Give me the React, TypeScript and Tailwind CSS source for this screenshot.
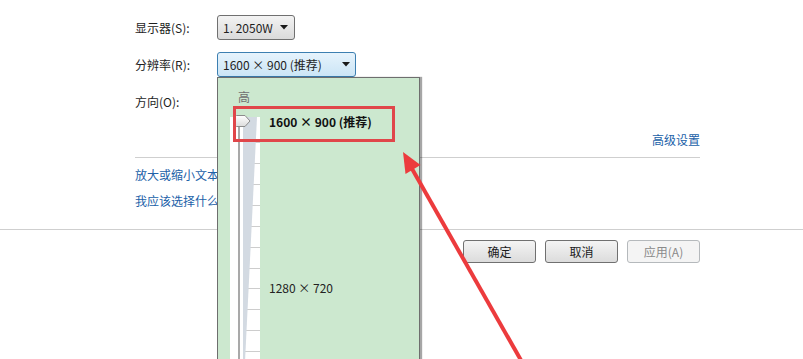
import React from "react";

function Caret() {
  return (
    <svg width="8" height="5" viewBox="0 0 8 5" className="shrink-0">
      <path d="M0 0 H8 L4 4.5 Z" fill="#1a1a1a" />
    </svg>
  );
}

function SliderTrack() {
  const ticks = [25, 46, 67, 88, 109, 130, 151, 171, 192, 213, 234];
  return (
    <svg width="30" height="245" viewBox="0 0 30 245" className="block">
      <rect x="0" y="0" width="8" height="245" fill="#ffffff" />
      <rect x="8" y="0" width="2" height="245" fill="#a9a9a9" />
      <rect x="10" y="0" width="20" height="245" fill="#ffffff" />
      {ticks.map((t) => (
        <rect key={t} x="13" y={t} width="17" height="1" fill="#cdcdcd" />
      ))}
      <polygon points="13,0 27,0 15,245 13,245" fill="#d3dae2" />
    </svg>
  );
}

function Thumb() {
  return (
    <svg width="18" height="12" viewBox="0 0 18 12">
      <defs>
        <linearGradient id="tg" x1="0" y1="0" x2="0" y2="1">
          <stop offset="0" stopColor="#ffffff" />
          <stop offset="1" stopColor="#dcdcdc" />
        </linearGradient>
      </defs>
      <path
        d="M3.5 0.5 H12 L17 6 L12 11.5 H3.5 Q0.5 11.5 0.5 8.5 V3.5 Q0.5 0.5 3.5 0.5 Z"
        fill="url(#tg)"
        stroke="#8c8c8c"
      />
    </svg>
  );
}

function Button({ label, disabled }: { label: string; disabled?: boolean }) {
  return (
    <div
      className={
        disabled
          ? "flex h-[23px] w-[73px] items-center justify-center rounded-[3px] border border-[#b5b9bc] bg-[#f4f4f4] text-[#8a8a8a]"
          : "flex h-[23px] w-[73px] items-center justify-center rounded-[3px] border border-[#707070] bg-gradient-to-b from-[#f4f4f4] to-[#dcdcdc] text-[#1a1a1a]"
      }
    >
      {label}
    </div>
  );
}

export default function App() {
  return (
    <div className="relative h-[359px] w-[803px] overflow-hidden bg-white font-['Noto_Sans_CJK_SC','Noto_Sans',sans-serif] text-[12px] leading-[16px] text-[#1e1e1e]">
      <div className="pl-[135px] pr-[103px] pt-[15px]">
        <div className="flex h-[25px] items-center">
          <span className="w-[82px]">显示器(S):</span>
          <div className="flex h-[25px] w-[78px] items-center justify-between rounded-[3px] border border-[#707070] bg-gradient-to-b from-[#f3f3f3] to-[#dadada] pl-[5px] pr-[6px]">
            <span>1. 2050W</span>
            <Caret />
          </div>
        </div>
        <div className="mt-[12px] flex h-[25px] items-center">
          <span className="w-[82px]">分辨率(R):</span>
          <div className="flex h-[25px] w-[139px] items-center justify-between rounded-[3px] border border-[#3c7fb1] bg-gradient-to-b from-[#e6f3fc] to-[#cbe5f6] pl-[5px] pr-[5px]">
            <span>1600 × 900 (推荐)</span>
            <Caret />
          </div>
        </div>
        <div className="mt-[12px] flex h-[25px] items-center">
          <span>方向(O):</span>
        </div>
        <div className="mt-[16px] flex h-[20px] items-center justify-end text-[#2161a8]">
          高级设置
        </div>
        <div className="mt-[7px] border-t border-[#cfcfcf]" />
        <div className="mt-[7px] flex h-[20px] items-center text-[#2161a8]">
          放大或缩小文本和其他项目
        </div>
        <div className="mt-[6px] flex h-[20px] items-center text-[#2161a8]">
          我应该选择什么显示器设置?
        </div>
      </div>
      <div className="mt-[18px] border-t border-[#cfcfcf]" />
      <div className="mt-[10px] flex justify-end gap-[9px] pr-[103px]">
        <Button label="确定" />
        <Button label="取消" />
        <Button label="应用(A)" disabled />
      </div>

      {/* dropdown popup */}
      <div className="absolute left-[217px] top-[77px] h-[300px] w-[203px] border border-[#6e6e6e] bg-[#cce8cf] shadow-[2px_0_1px_rgba(0,0,0,0.35)]">
        <div className="pl-[20px] pt-[11px] text-[#6f6f6f]">高</div>
        <div className="mt-[9px] flex">
          <div className="w-[42px] shrink-0 pl-[12px] pt-[3px]">
            <SliderTrack />
          </div>
          <div className="flex flex-col pl-[9px]">
            <div className="h-[16px] font-bold text-[#111]">1600 × 900 (推荐)</div>
            <div className="mt-[150px] h-[16px] text-[#222]">1280 × 720</div>
          </div>
        </div>
        <div className="absolute left-[15px] top-[37px]">
          <Thumb />
        </div>
        <div className="absolute left-[15px] top-[28px] h-[36px] w-[162px] border-[3px] border-[#e0464a]" />
      </div>

      {/* red arrow annotation */}
      <svg
        className="pointer-events-none absolute left-0 top-0"
        width="803"
        height="359"
        viewBox="0 0 803 359"
      >
        <line x1="411" y1="167" x2="522" y2="362" stroke="#ec3b3d" strokeWidth="4" />
        <polygon points="403,152 420.5,165 405.5,174" fill="#ec3b3d" />
      </svg>
    </div>
  );
}
